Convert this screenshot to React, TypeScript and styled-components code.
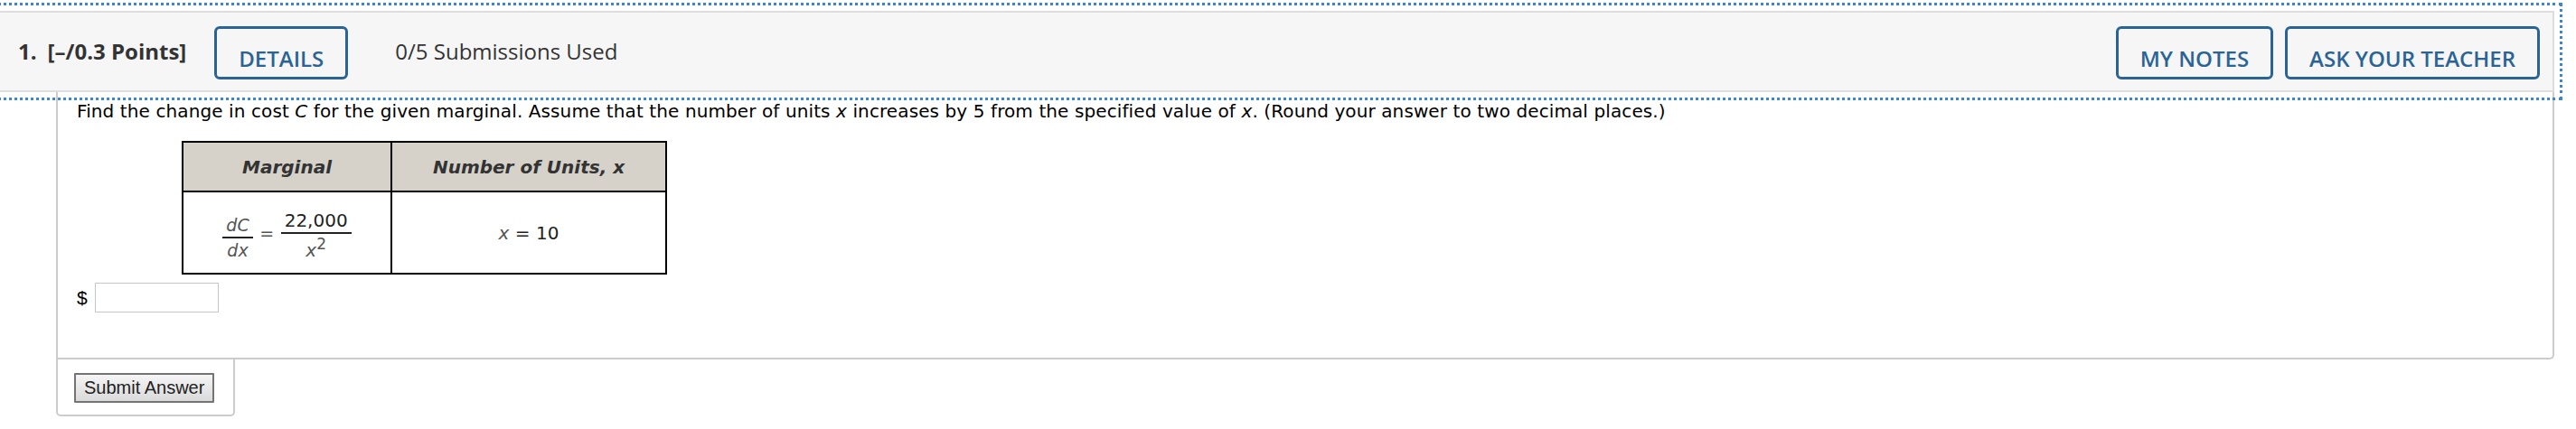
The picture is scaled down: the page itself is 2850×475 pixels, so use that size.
import React from "react";
import styled, { createGlobalStyle } from "styled-components";

const GlobalStyle = createGlobalStyle`
  html, body {
    margin: 0;
    padding: 0;
    background: #ffffff;
  }
  body {
    font-family: "Open Sans", "Liberation Sans", sans-serif;
    color: #333333;
  }
`;

// whole question block, header + body + submit strip
const Question = styled.section`
  margin: 12px 24px 0 0;
`;

const Header = styled.header`
  display: flex;
  align-items: flex-start;
  height: 90px;
  box-sizing: border-box;
  padding: 15px 14px 0 20px;
  background: #f6f6f6;
  border: 2px solid #dddddd;
  border-left: none;
  outline: 3px dotted #3a85d8;
  outline-offset: 6px;
`;

const Label = styled.span<{ $bold?: boolean }>`
  margin-top: 12px;
  font-size: 24px;
  line-height: 32px;
  font-weight: ${(p) => (p.$bold ? 700 : 400)};
  color: #333333;
  white-space: nowrap;
`;

const QNumber = styled(Label)`
  margin-right: 12px;
`;

const Points = styled(Label)`
  margin-right: 31px;
`;

const Submissions = styled(Label)`
  margin-left: 52px;
`;

const Spacer = styled.div`
  flex: 1;
`;

const Actions = styled.div`
  display: flex;
  gap: 13px;
`;

const OutlineButton = styled.button`
  padding: 17px 24px 4px;
  border: 3px solid #2a6496;
  border-radius: 6px;
  background: transparent;
  color: #2a6496;
  font-family: "Open Sans", sans-serif;
  font-size: 24px;
  font-weight: 600;
  line-height: 32px;
  text-transform: uppercase;
  white-space: nowrap;
  cursor: pointer;
`;

const Body = styled.div`
  margin-left: 62px;
  padding: 10px 21px 50px;
  border: 2px solid #cccccc;
  border-top: none;
  border-bottom-right-radius: 5px;
`;

const Prompt = styled.p`
  margin: 0;
  font-family: "DejaVu Sans", Verdana, sans-serif;
  font-size: 20px;
  line-height: 23px;
  letter-spacing: 0.1px;
  color: #000000;
`;

const Var = styled.i`
  font-style: italic;
`;

const Table = styled.table`
  margin: 21px 0 0 116px;
  width: 537px;
  table-layout: fixed;
  border-collapse: separate;
  border-spacing: 0;
  border: 2px solid #000000;
  font-family: "DejaVu Sans", Verdana, sans-serif;
  font-size: 20px;
`;

const HeadCell = styled.th<{ $last?: boolean }>`
  box-sizing: border-box;
  width: ${(p) => (p.$last ? "auto" : "231px")};
  height: 55px;
  padding: 0;
  background: #d6d2ca;
  border-bottom: 2px solid #000000;
  border-right: ${(p) => (p.$last ? "none" : "2px solid #000000")};
  color: #333333;
  font-weight: 700;
  font-style: italic;
  text-align: center;
  vertical-align: middle;
`;

const Cell = styled.td<{ $last?: boolean }>`
  box-sizing: border-box;
  height: 89px;
  padding: 0;
  border-right: ${(p) => (p.$last ? "none" : "2px solid #000000")};
  color: #222222;
  text-align: center;
  vertical-align: middle;
`;

const Formula = styled.div`
  display: flex;
  justify-content: center;
  align-items: flex-start;
  padding-top: 5px;
`;

const Frac = styled.span<{ $top: number }>`
  display: inline-flex;
  flex-direction: column;
  align-items: center;
  margin-top: ${(p) => p.$top}px;
`;

const FracLine = styled.span<{ $size: number; $italic?: boolean; $color: string }>`
  padding: 0 4px;
  font-size: ${(p) => p.$size}px;
  line-height: 20px;
  font-style: ${(p) => (p.$italic ? "italic" : "normal")};
  color: ${(p) => p.$color};
  white-space: nowrap;
`;

const FracBar = styled.span<{ $above: number; $below: number }>`
  align-self: stretch;
  height: 2px;
  margin: ${(p) => p.$above}px 0 ${(p) => p.$below}px;
  background: #222222;
`;

const Equals = styled.span`
  width: 31px;
  margin-top: 14px;
  font-size: 19px;
  line-height: 20px;
  color: #555555;
  text-align: center;
`;

const Sup = styled.sup`
  font-size: 17px;
  line-height: 0;
  vertical-align: 8px;
  font-style: normal;
`;

const MathVar = styled.i`
  color: #555555;
`;

const AnswerRow = styled.div`
  display: flex;
  align-items: center;
  margin-top: 9px;
`;

const Dollar = styled.span`
  margin-right: 8px;
  font-family: "Liberation Sans", Arial, sans-serif;
  font-size: 21px;
  color: #000000;
`;

const AnswerInput = styled.input`
  width: 137px;
  height: 33px;
  box-sizing: border-box;
  margin: 0;
  padding: 2px 6px;
  border: 1px solid #c6c6c6;
  font-family: "Liberation Sans", Arial, sans-serif;
  font-size: 18px;
  outline: none;
`;

const SubmitBar = styled.div`
  width: 198px;
  box-sizing: border-box;
  margin-left: 62px;
  padding: 15px 0 13px 18px;
  border: 2px solid #cccccc;
  border-top: none;
  border-radius: 0 0 5px 5px;
`;

const SubmitButton = styled.button`
  height: 33px;
  padding: 0 9px;
  border: 2px solid #747474;
  border-radius: 1px;
  background: linear-gradient(#f5f5f5, #dadada);
  color: #222222;
  font-family: "Liberation Sans", Arial, sans-serif;
  font-size: 20px;
  line-height: 29px;
  cursor: pointer;
`;

export default function App() {
  return (
    <>
      <GlobalStyle />
      <Question>
        <Header>
          <QNumber $bold>1.</QNumber>
          <Points $bold>[–/0.3 Points]</Points>
          <OutlineButton>Details</OutlineButton>
          <Submissions>0/5 Submissions Used</Submissions>
          <Spacer />
          <Actions>
            <OutlineButton>My Notes</OutlineButton>
            <OutlineButton>Ask Your Teacher</OutlineButton>
          </Actions>
        </Header>

        <Body>
          <Prompt>
            Find the change in cost <Var>C</Var> for the given marginal. Assume that the number of
            units <Var>x</Var> increases by 5 from the specified value of <Var>x</Var>. (Round your
            answer to two decimal places.)
          </Prompt>

          <Table>
            <thead>
              <tr>
                <HeadCell>Marginal</HeadCell>
                <HeadCell $last>Number of Units, x</HeadCell>
              </tr>
            </thead>
            <tbody>
              <tr>
                <Cell>
                  <Formula>
                    <Frac $top={5}>
                      <FracLine $size={19} $italic $color="#555555">dC</FracLine>
                      <FracBar $above={3} $below={3} />
                      <FracLine $size={19} $italic $color="#555555">dx</FracLine>
                    </Frac>
                    <Equals>=</Equals>
                    <Frac $top={0}>
                      <FracLine $size={20} $color="#222222">22,000</FracLine>
                      <FracBar $above={3} $below={8} />
                      <FracLine $size={20} $italic $color="#555555">
                        x<Sup>2</Sup>
                      </FracLine>
                    </Frac>
                  </Formula>
                </Cell>
                <Cell $last>
                  <MathVar>x</MathVar> = 10
                </Cell>
              </tr>
            </tbody>
          </Table>

          <AnswerRow>
            <Dollar>$</Dollar>
            <AnswerInput type="text" aria-label="answer" />
          </AnswerRow>
        </Body>

        <SubmitBar>
          <SubmitButton>Submit Answer</SubmitButton>
        </SubmitBar>
      </Question>
    </>
  );
}
